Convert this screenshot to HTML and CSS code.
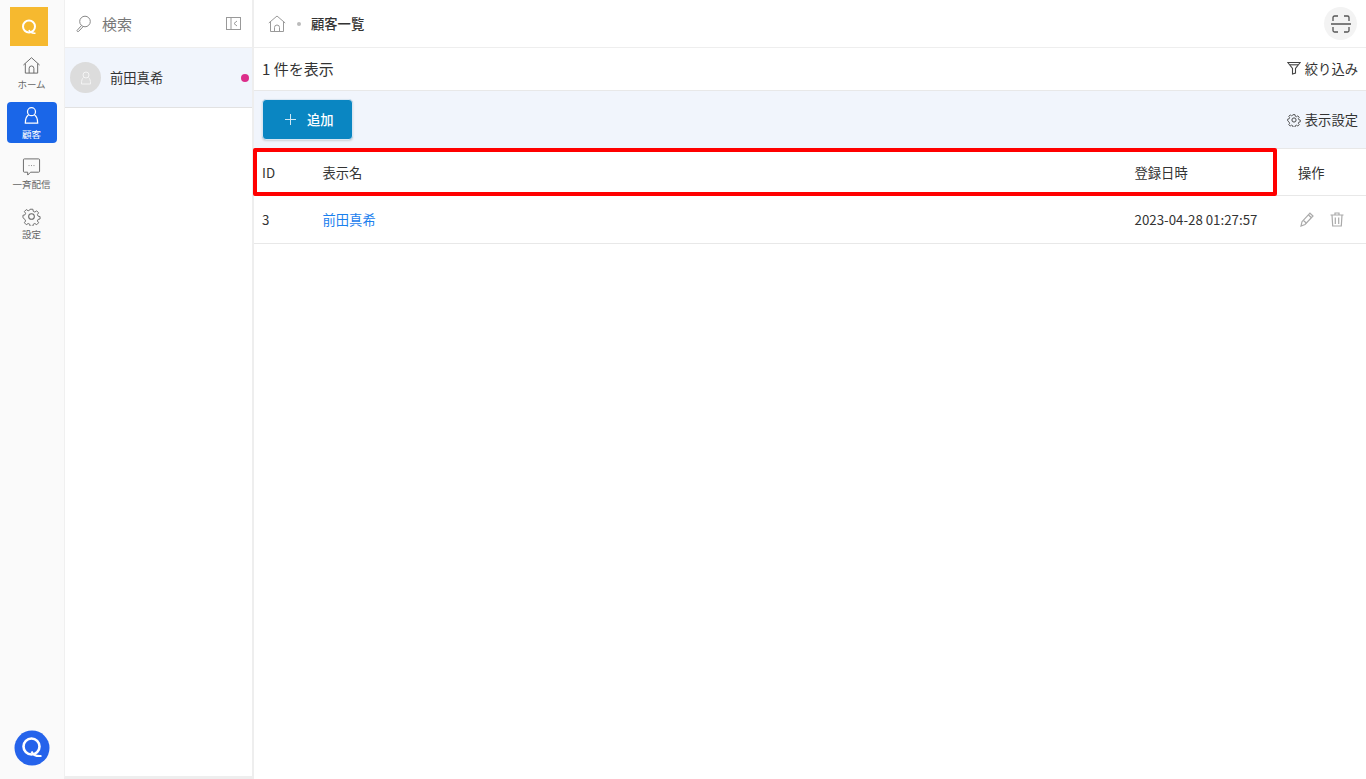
FILE: index.html
```html
<!DOCTYPE html>
<html lang="ja">
<head>
<meta charset="utf-8">
<title>顧客一覧</title>
<link rel="stylesheet" href="styles.css">
</head>
<body>
<div class="app">
  <nav class="rail">
    <div class="logo"><svg width="18" height="18" viewBox="0 0 18 18" fill="none" stroke="#fff" stroke-width="2"><circle cx="9" cy="8.500" r="6"/><path d="M9 12c1 2.500 3 3.500 6.500 3.200" stroke-width="1.600"/></svg></div>
    <a class="nav-item">
      <svg width="20" height="20" viewBox="0 0 20 20" fill="none" stroke="currentColor" stroke-width="1"><path d="M1.500 9.500 10 1.800l8.500 7.700"/><path d="M3.500 8v10h13V8"/><path d="M7.500 18v-5a2.500 2.500 0 0 1 5 0v5"/></svg>
      <span>ホーム</span>
    </a>
    <a class="nav-item active">
      <svg width="20" height="20" viewBox="0 0 20 20" fill="none" stroke="currentColor" stroke-width="1.300"><circle cx="10" cy="6" r="4.200"/><path d="M6.800 9.500C4.500 11 3.500 13.500 3.500 18h13c0-4.500-1-7-3.300-8.500"/></svg>
      <span>顧客</span>
    </a>
    <a class="nav-item">
      <svg width="20" height="20" viewBox="0 0 20 20" fill="none" stroke="currentColor" stroke-width="1"><path d="M2.500 2h15a1 1 0 0 1 1 1v12a1 1 0 0 1-1 1H9l-3 3v-3H2.500a1 1 0 0 1-1-1V3a1 1 0 0 1 1-1z"/><path d="M7 9h.8M9.600 9h.8M12.200 9h.8"/></svg>
      <span>一斉配信</span>
    </a>
    <a class="nav-item">
      <svg width="20" height="20" viewBox="0 0 20 20" fill="none" stroke="currentColor" stroke-width="1.100"><circle cx="10" cy="10" r="3"/><path d="M8.400 1.500h3.200l.5 2.500 1.800.8 2.200-1.400 2.200 2.300-1.400 2.100.8 1.800 2.300.5v2.800l-2.300.5-.8 1.800 1.400 2.100-2.200 2.300-2.200-1.400-1.800.8-.5 2.500H8.400l-.5-2.500-1.800-.8-2.200 1.400-2.200-2.300 1.400-2.100-.8-1.800L0 11.400V8.600l2.300-.5.800-1.800L1.700 4.200l2.200-2.300 2.200 1.400 1.800-.8z" transform="translate(1 1) scale(.9)"/></svg>
      <span>設定</span>
    </a>
    <div class="rail-foot"><svg width="36" height="36" viewBox="0 0 36 36" fill="none"><circle cx="18" cy="18" r="17.500" fill="#2563eb"/><circle cx="17.500" cy="16.500" r="8" stroke="#fff" stroke-width="2.600"/><path d="M17.500 21.500c1.500 3.500 5 5 10 4.500" stroke="#fff" stroke-width="2"/></svg></div>
  </nav>

  <aside class="panel">
    <div class="search">
      <svg class="search-icon" width="16" height="18" viewBox="0 0 16 18" fill="none" stroke="#888" stroke-width="1"><circle cx="10" cy="6.500" r="5.300"/><path d="M6.500 10.500 2 15.500a1 1 0 0 0 1.500 1L8 11.800"/></svg>
      <span class="search-label">検索</span>
      <svg class="collapse" width="15" height="13" viewBox="0 0 15 13" fill="none" stroke="#999" stroke-width="1"><rect x=".5" y=".5" width="14" height="12"/><path d="M5 .5v12M11 4 8 6.500 11 9"/></svg>
    </div>
    <div class="customer">
      <div class="avatar"><svg width="14" height="14" viewBox="0 0 14 14" fill="none" stroke="#f4f4f4" stroke-width="1"><circle cx="7" cy="4" r="3"/><path d="M4.500 6.500C3 7.500 2.500 9.500 2.500 13h9c0-3.500-.5-5.500-2-6.500"/></svg></div>
      <span class="customer-name">前田真希</span>
      <span class="dot"></span>
    </div>
  </aside>

  <main class="main">
    <header class="topbar">
      <svg class="crumb-home" width="18" height="17" viewBox="0 0 18 17" fill="none" stroke="#999" stroke-width="1"><path d="M.8 8 9 1l8.200 7"/><path d="M2.500 6.500v10h13v-10"/><path d="M6.500 16.500v-4a2.500 2.500 0 0 1 5 0v4"/></svg>
      <span class="crumb-sep"></span>
      <span class="crumb">顧客一覧</span>
      <span class="scan"><svg width="20" height="18" viewBox="0 0 20 18" fill="none" stroke="#555" stroke-width="1.300"><path d="M2 6V2.500A1.500 1.500 0 0 1 3.500 1H7M13 1h3.500A1.500 1.500 0 0 1 18 2.500V6M2 12v3.500A1.500 1.500 0 0 0 3.500 17H7M13 17h3.500a1.500 1.500 0 0 0 1.500-1.500V12M0 9h20"/></svg></span>
    </header>

    <div class="countbar">
      <span class="count">1 件を表示</span>
      <span class="tool"><svg width="14" height="14" viewBox="0 0 14 14" fill="none" stroke="#444" stroke-width="1.100"><path d="M.8 1.500h12.400L8.500 7.500V12L5.500 13V7.500z"/><path d="M3 3.800h8"/></svg>絞り込み</span>
    </div>

    <div class="actionbar">
      <button class="add"><span class="plus"></span>追加</button>
      <span class="tool"><svg width="14" height="14" viewBox="0 0 20 20" fill="none" stroke="#444" stroke-width="1.400"><circle cx="10" cy="10" r="3"/><path d="M8.400 1.500h3.200l.5 2.500 1.800.8 2.200-1.400 2.200 2.300-1.400 2.100.8 1.800 2.300.5v2.800l-2.300.5-.8 1.800 1.400 2.100-2.200 2.300-2.200-1.400-1.800.8-.5 2.500H8.400l-.5-2.500-1.800-.8-2.200 1.400-2.200-2.300 1.400-2.100-.8-1.800L0 11.400V8.600l2.300-.5.800-1.800L1.700 4.200l2.200-2.300 2.200 1.400 1.800-.8z" transform="translate(1 1) scale(.9)"/></svg>表示設定</span>
    </div>

    <div class="row head">
      <span class="c-id">ID</span>
      <span class="c-name">表示名</span>
      <span class="c-date">登録日時</span>
      <span class="c-ops">操作</span>
    </div>
    <div class="row body">
      <span class="c-id">3</span>
      <a class="c-name link">前田真希</a>
      <span class="c-date">2023-04-28 01:27:57</span>
      <span class="c-ops icons">
        <svg width="14" height="15" viewBox="0 0 14 15" fill="none" stroke="#aaa" stroke-width="1.200"><path d="M10 1.200 13 4 5 12.500 1 14l1-4.300z"/><path d="M8.500 3 11.500 5.800M3.500 8.500l3 2.800"/></svg>
        <svg width="14" height="15" viewBox="0 0 14 15" fill="none" stroke="#aaa" stroke-width="1.200"><path d="M.5 3h13M5 3V1h4v2M2 3l.7 11h8.600L12 3M5.300 5.500v6.500M8.700 5.500v6.500"/></svg>
      </span>
    </div>
    <div class="highlight"></div>
  </main>
</div>
</body>
</html>
```
FILE: styles.css
```css
* { box-sizing: border-box; }
html, body { margin: 0; height: 100%; }
body {
  font-family: "Noto Sans CJK JP", "Noto Sans", sans-serif;
  color: #333;
  background: #fff;
  overflow: hidden;
}
.app { display: flex; height: 779px; }

.rail {
  width: 64px;
  flex: none;
  background: #fafafa;
  display: flex;
  flex-direction: column;
  align-items: center;
  padding-top: 7px;
}
.logo {
  width: 38px;
  height: 39px;
  background: #f6b92f;
  display: flex;
  align-items: center;
  justify-content: center;
  margin: 0 6px 6px 0;
}
.nav-item {
  width: 50px;
  height: 41px;
  margin: 0 1px 9.300px 0;
  display: flex;
  flex-direction: column;
  align-items: center;
  padding-top: 4px;
  border-radius: 4px;
  color: #666;
  font-size: 9.500px;
  line-height: 11px;
  gap: 3.500px;
}
.nav-item svg { flex: none; width: 19px; height: 19px; }
.nav-item.active { background: #1a66e8; color: #fff; }
.rail-foot { margin-top: auto; margin-bottom: 13px; display: flex; }

.panel {
  width: 190px;
  flex: none;
  border-left: 1px solid #f0f0f0;
  border-right: 2px solid #eee;
  border-bottom: 3px solid #eee;
  background: #fff;
  height: 779px;
}
.search {
  height: 47px;
  display: flex;
  align-items: center;
  padding: 0 11px;
  color: #777;
  font-size: 15px;
}
.search-icon { flex: none; margin-left: -1px; }
.search-label { margin-left: 11px; }
.collapse { margin-left: auto; }
.customer {
  height: 61px;
  background: #f1f5fc;
  border-top: 1px solid #eee;
  border-bottom: 1px solid #e2e2e2;
  display: flex;
  align-items: center;
  padding: 0 3px 0 5px;
  font-size: 13.300px;
  color: #333;
}
.avatar {
  width: 31px;
  height: 31px;
  border-radius: 50%;
  background: #dcdcdc;
  display: flex;
  align-items: center;
  justify-content: center;
  flex: none;
}
.customer-name { margin-left: 9px; }
.dot {
  width: 8px;
  height: 8px;
  border-radius: 50%;
  background: #dc2e8a;
  margin-left: auto;
}

.main { flex: 1; min-width: 0; position: relative; }
.topbar {
  height: 48px;
  border-bottom: 1px solid #eee;
  display: flex;
  align-items: center;
  padding: 0 9px 0 14px;
  font-size: 13.300px;
  color: #333;
}
.crumb-sep {
  width: 4px;
  height: 4px;
  border-radius: 50%;
  background: #bbb;
  margin: 0 10px 0 11px;
}
.crumb { font-weight: 500; font-size: 13.300px; }
.scan {
  margin-left: auto;
  width: 33px;
  height: 33px;
  border-radius: 50%;
  background: #f3f3f3;
  display: flex;
  align-items: center;
  justify-content: center;
}
.countbar {
  height: 43px;
  border-bottom: 1px solid #e8e8e8;
  display: flex;
  align-items: center;
  justify-content: space-between;
  padding: 0 8px 2px;
}
.count { font-size: 15px; color: #333; }
.tool {
  display: flex;
  align-items: center;
  gap: 4px;
  font-size: 13.300px;
  color: #333;
}
.actionbar {
  height: 58px;
  background: #f1f5fc;
  border-bottom: 1px solid #e8e8e8;
  display: flex;
  align-items: center;
  justify-content: space-between;
  padding: 0 8px;
}
.add {
  width: 91px;
  height: 41px;
  background: #0a86c2;
  border: 1px solid #d8e6f2;
  border-radius: 4px;
  color: #fff;
  font: inherit;
  font-size: 13.300px;
  font-weight: 500;
  display: flex;
  align-items: center;
  padding: 0 0 0 22px;
  box-shadow: 0 1px 2px rgba(0, 0, 0, .15);
}
.plus {
  width: 11px;
  height: 11px;
  margin-right: 11px;
  background:
    linear-gradient(#cfe7f4, #cfe7f4) center / 100% 1px no-repeat,
    linear-gradient(#cfe7f4, #cfe7f4) center / 1px 100% no-repeat;
}
.row {
  height: 47px;
  border-bottom: 1px solid #e8e8e8;
  display: flex;
  align-items: center;
  font-size: 13.300px;
  color: #333;
}
.row.body { height: 48px; }
.c-id { width: 68.500px; padding-left: 8px; flex: none; }
.c-name { width: 812px; flex: none; }
.c-date { width: 163.500px; flex: none; }
.c-ops { flex: 1; }
.link { color: #1a80ee; }
.icons { display: flex; gap: 16px; padding-left: 2px; align-items: center; }
.highlight {
  position: absolute;
  left: -1px;
  top: 148px;
  width: 1024px;
  height: 48px;
  border: 4px solid #f00;
  border-radius: 2px;
  pointer-events: none;
}
```
